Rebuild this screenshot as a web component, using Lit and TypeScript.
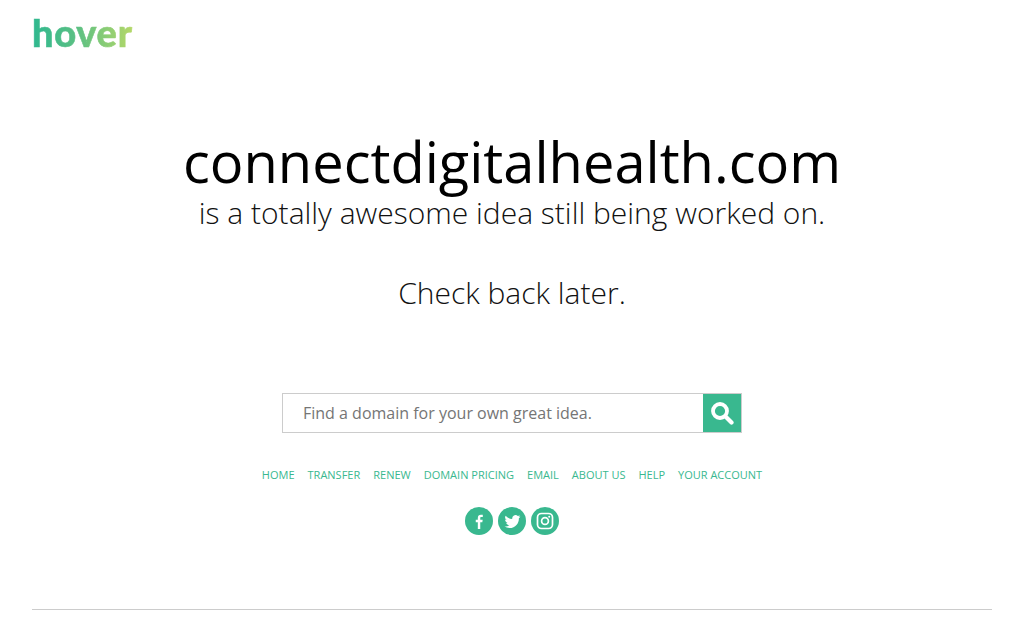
import { LitElement, html, css } from "lit";
import { customElement } from "lit/decorators.js";

const links = ["HOME", "TRANSFER", "RENEW", "DOMAIN PRICING", "EMAIL", "ABOUT US", "HELP", "YOUR ACCOUNT"];

@customElement("app-root")
export class AppRoot extends LitElement {
  static styles = css`
    :host {
      display: block;
      height: 629px;
      overflow: hidden;
      background: #fff;
      font-family: "Open Sans", sans-serif;
      color: #111;
    }
    .page {
      display: flex;
      flex-direction: column;
      padding: 0 32px;
    }
    .logo {
      height: 70px;
      box-sizing: border-box;
      padding-top: 8px;
    }
    .logo span {
      display: inline-block;
      font-family: "Lato", sans-serif;
      font-weight: 900;
      font-size: 38px;
      line-height: 48px;
      letter-spacing: 0.7px;
      -webkit-text-stroke: 0.6px transparent;
      background: linear-gradient(90deg, #2eb88f 0%, #5cc083 45%, #b5d868 100%);
      -webkit-background-clip: text;
      background-clip: text;
      color: transparent;
    }
    .main {
      display: flex;
      flex-direction: column;
      align-items: center;
    }
    h1 {
      margin: 59px 0 0;
      font-weight: 400;
      font-size: 56px;
      line-height: 64px;
      color: #000;
    }
    .sub {
      font-weight: 300;
      font-size: 30px;
      line-height: 40px;
    }
    .later {
      font-weight: 300;
      font-size: 30px;
      line-height: 40px;
      margin-top: 40px;
    }
    form {
      display: flex;
      width: 460px;
      height: 40px;
      margin-top: 80px;
      box-sizing: border-box;
      border: 1px solid #ccc;
    }
    .field {
      flex: 1;
      padding-left: 20px;
      font-size: 16px;
      line-height: 38px;
      color: #757575;
    }
    .btn {
      width: 38px;
      background: #39b88f;
      display: flex;
      align-items: center;
      justify-content: center;
    }
    nav {
      display: flex;
      gap: 13px;
      margin-top: 33px;
      font-size: 11px;
      line-height: 18px;
      color: #39b88f;
    }
    .social {
      display: flex;
      gap: 5px;
      margin-top: 23px;
    }
    .circle {
      width: 28px;
      height: 28px;
      border-radius: 50%;
      background: #39b88f;
      display: flex;
      align-items: center;
      justify-content: center;
    }
    hr {
      margin: 74px 0 0;
      border: 0;
      border-top: 1px solid #ccc;
    }
  `;

  render() {
    return html`
      <div class="page">
        <div class="logo"><span>hover</span></div>
        <div class="main">
          <h1>connectdigitalhealth.com</h1>
          <div class="sub">is a totally awesome idea still being worked on.</div>
          <div class="later">Check back later.</div>
          <form>
            <div class="field">Find a domain for your own great idea.</div>
            <div class="btn">
              <svg width="24" height="24" viewBox="0 0 24 24" fill="none" stroke="#fff">
                <circle cx="10" cy="10" r="7" stroke-width="3.8"></circle>
                <path d="M15.5 15.5L21.5 21.5" stroke-width="4.2" stroke-linecap="round"></path>
              </svg>
            </div>
          </form>
          <nav>${links.map((l) => html`<span>${l}</span>`)}</nav>
          <div class="social">
            <div class="circle">
              <svg width="15" height="15" viewBox="0 0 16 16" fill="#fff">
                <path d="M6.2 16V8.8H4V6h2.2V4.2C6.2 1.900 7.5.8 9.5.8c1 0 1.800.1 2 .1v2.400h-1.400c-1.100 0-1.300.5-1.300 1.300V6h2.600l-.4 2.800H8.800V16z"></path>
              </svg>
            </div>
            <div class="circle">
              <svg width="17" height="17" viewBox="0 0 24 24" fill="#fff">
                <path d="M23 5.100c-.8.4-1.700.6-2.600.7.9-.6 1.600-1.400 2-2.500-.9.5-1.900.9-2.900 1.100A4.600 4.600 0 0 0 11.700 8.600 13 13 0 0 1 2.300 3.800a4.600 4.600 0 0 0 1.400 6.100c-.7 0-1.400-.2-2.100-.6v.1c0 2.200 1.600 4.100 3.700 4.500-.7.2-1.400.2-2.100.1.6 1.800 2.300 3.100 4.300 3.200A9.200 9.200 0 0 1 .7 19.100 13 13 0 0 0 7.800 21.200c8.500 0 13.200-7 13.200-13.200v-.6c.9-.6 1.600-1.400 2-2.300z"></path>
              </svg>
            </div>
            <div class="circle">
              <svg width="18" height="18" viewBox="0 0 18 18" fill="none" stroke="#fff" stroke-width="1.7">
                <rect x="1.500" y="1.500" width="15" height="15" rx="4"></rect>
                <circle cx="9" cy="9" r="3.400"></circle>
                <circle cx="13.200" cy="4.800" r="1" fill="#fff" stroke="none"></circle>
              </svg>
            </div>
          </div>
        </div>
        <hr />
      </div>
    `;
  }
}
